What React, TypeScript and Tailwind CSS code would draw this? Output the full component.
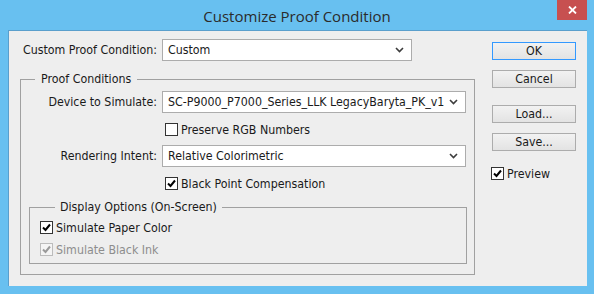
import React from 'react';

const font = "font-['DejaVu_Sans_Condensed','DejaVu_Sans',sans-serif]";

function Chevron() {
  return (
    <svg width="9" height="6" viewBox="0 0 9 6" className="shrink-0">
      <polyline points="1,1 4.5,4.5 8,1" fill="none" stroke="#3c3c3c" strokeWidth="1.6" />
    </svg>
  );
}

function Select({ value, width }: { value: string; width: string }) {
  return (
    <div className={`${width} h-[22px] bg-white border border-[#acacac] flex items-center justify-between pl-[5px] pr-[7px]`}>
      <span className="whitespace-nowrap">{value}</span>
      <Chevron />
    </div>
  );
}

function Checkbox({ label, checked, disabled }: { label: string; checked?: boolean; disabled?: boolean }) {
  return (
    <div className="flex items-center h-[13px]">
      <div
        className={`w-[13px] h-[13px] border flex items-center justify-center ${
          disabled ? 'border-[#bcbcbc] bg-[#f4f4f4]' : 'border-[#333333] bg-white'
        }`}
      >
        {checked && (
          <svg width="9" height="9" viewBox="0 0 9 9">
            <polyline
              points="1,4.5 3.5,7 8,1.5"
              fill="none"
              stroke={disabled ? '#9a9a9a' : '#000000'}
              strokeWidth="2"
            />
          </svg>
        )}
      </div>
      <span className={`ml-[3px] whitespace-nowrap ${disabled ? 'text-[#8d8d8d]' : ''}`}>{label}</span>
    </div>
  );
}

function Button({ label, primary }: { label: string; primary?: boolean }) {
  return (
    <div
      className={`w-[84px] h-[18px] flex items-center justify-center bg-gradient-to-b from-[#f2f2f2] to-[#e3e3e3] border ${
        primary ? 'border-[#3399ff]' : 'border-[#acacac]'
      }`}
    >
      {label}
    </div>
  );
}

export default function App() {
  return (
    <div className={`w-[594px] h-[294px] bg-[#68c0f0] flex flex-col text-[12.3px] leading-[14px] text-[#1a1a1a] ${font}`}>
      {/* title bar */}
      <div className="relative h-[30px] flex items-center justify-center">
        <span className="font-['Open_Sans','Noto_Sans',sans-serif] text-[15px] text-[#2b2b2b] pt-[1px]">
          Customize Proof Condition
        </span>
        <div className="absolute right-[7px] top-0 w-[30px] h-[20px] bg-[#c75050] flex items-center justify-center">
          <svg width="9" height="8" viewBox="0 0 9 8">
            <path d="M1 0.5 L8 7.5 M8 0.5 L1 7.5" stroke="#ffffff" strokeWidth="1.8" />
          </svg>
        </div>
      </div>

      {/* client area */}
      <div className="ml-[8px] mr-[7px] h-[256px] bg-[#eeeeee] border-t border-l border-[#5a9fcc] flex pl-[11px] pt-[8px]">
        <div className="w-[455px] flex flex-col">
          <div className="flex items-center h-[22px]">
            <div className="w-[137px] text-right">Custom Proof Condition:</div>
            <div className="ml-[5px]">
              <Select value="Custom" width="w-[250px]" />
            </div>
          </div>

          <fieldset className="mt-[11px] border border-[#a0a0a0] pb-[10px]">
            <legend className="ml-[14px] px-[6px] leading-[14px]">Proof Conditions</legend>
            <div className="flex items-center h-[22px] mt-[5px]">
              <div className="w-[136px] text-right">Device to Simulate:</div>
              <div className="ml-[5px]">
                <Select value="SC-P9000_P7000_Series_LLK LegacyBaryta_PK_v1" width="w-[304px]" />
              </div>
            </div>
            <div className="pl-[144px] mt-[10px]">
              <Checkbox label="Preserve RGB Numbers" />
            </div>
            <div className="flex items-center h-[22px] mt-[9px]">
              <div className="w-[136px] text-right">Rendering Intent:</div>
              <div className="ml-[5px]">
                <Select value="Relative Colorimetric" width="w-[304px]" />
              </div>
            </div>
            <div className="pl-[144px] mt-[10px]">
              <Checkbox label="Black Point Compensation" checked />
            </div>

            <fieldset className="ml-[8px] w-[438px] mt-[10px] border border-[#a0a0a0] pl-[10px] pb-[7px]">
              <legend className="ml-[15px] px-[5px] leading-[14px]">Display Options (On-Screen)</legend>
              <div className="mt-[7px]">
                <Checkbox label="Simulate Paper Color" checked />
              </div>
              <div className="mt-[9px]">
                <Checkbox label="Simulate Black Ink" checked disabled />
              </div>
            </fieldset>
          </fieldset>
        </div>

        <div className="ml-[17px] w-[84px] flex flex-col pt-[3px]">
          <Button label="OK" primary />
          <div className="mt-[10px]">
            <Button label="Cancel" />
          </div>
          <div className="mt-[17px]">
            <Button label="Load..." />
          </div>
          <div className="mt-[10px]">
            <Button label="Save..." />
          </div>
          <div className="mt-[16px] -ml-[1px]">
            <Checkbox label="Preview" checked />
          </div>
        </div>
      </div>
    </div>
  );
}
